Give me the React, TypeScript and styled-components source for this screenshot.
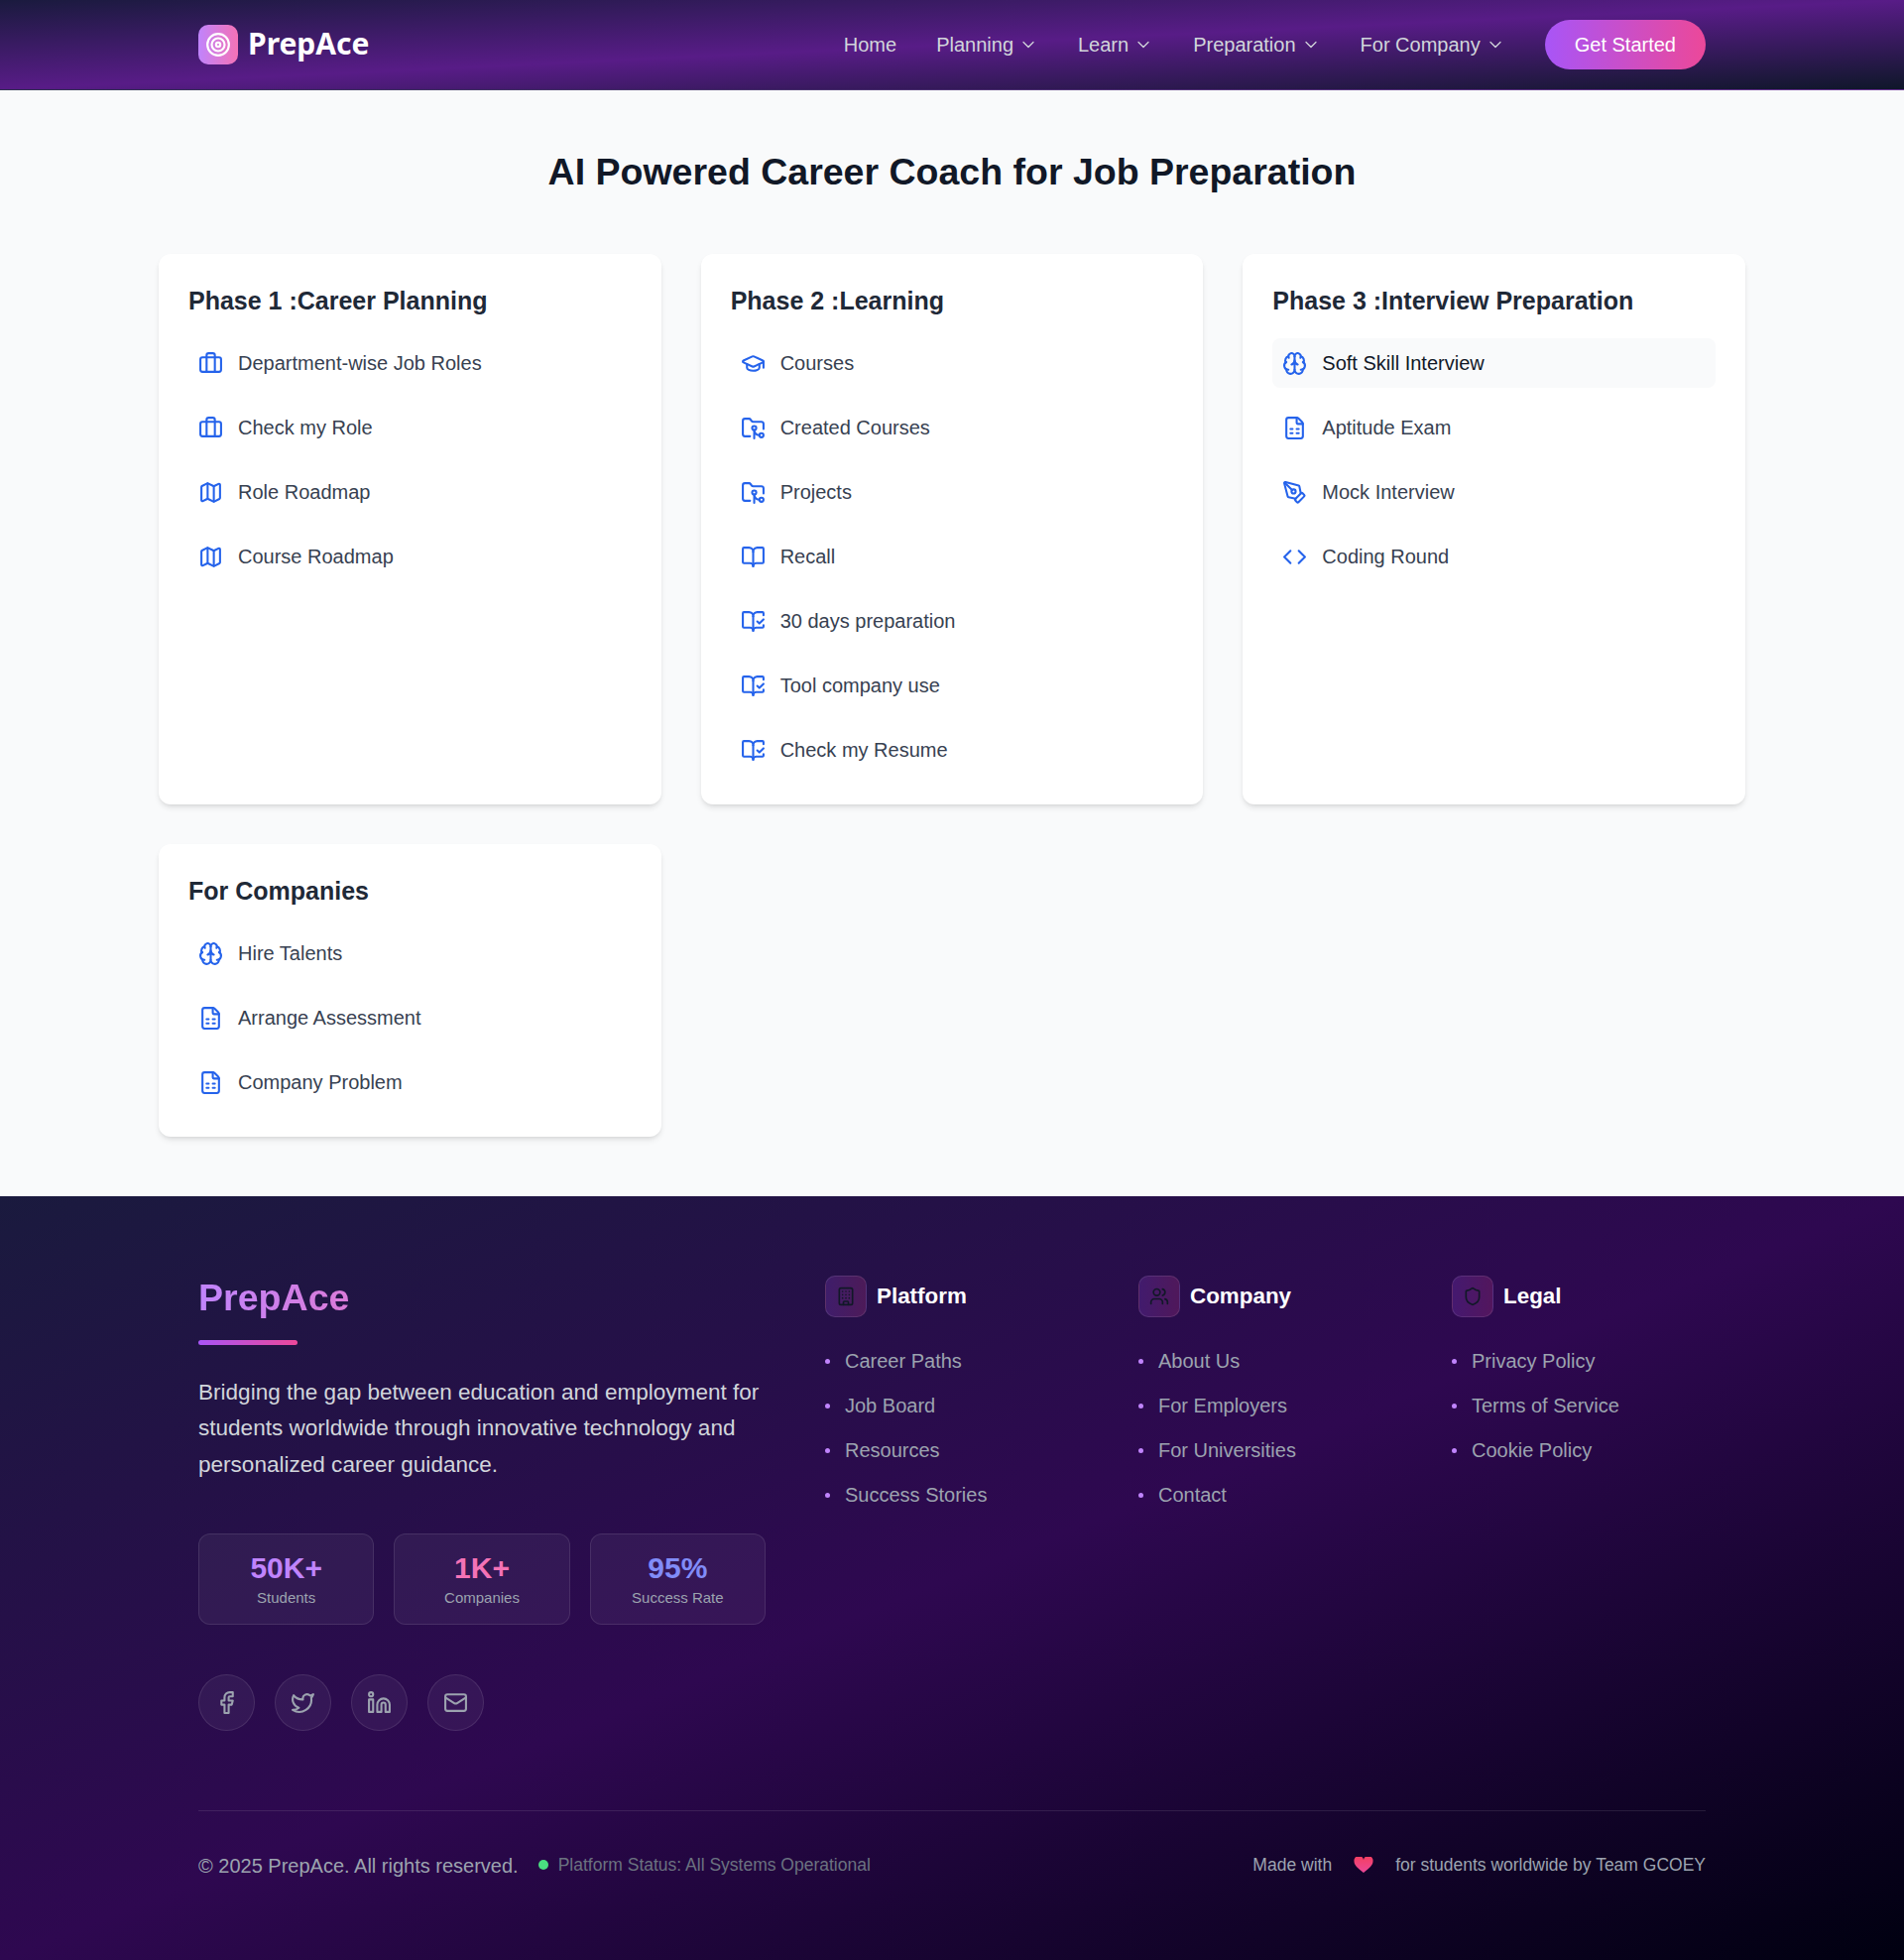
import React from "react";
import styled, { createGlobalStyle } from "styled-components";
import {
  Target, ChevronDown, Briefcase, Map as MapIcon, GraduationCap, FolderGit2, BookOpen, BookOpenCheck,
  Brain, FileSpreadsheet, PenTool, Code, Building, Users, Shield, Facebook, Twitter, Linkedin, Mail,
} from "lucide-react";

const Global = createGlobalStyle`
  * { box-sizing: border-box; }
  html, body { margin: 0; padding: 0; }
  body { font-family: "Liberation Sans", Arial, sans-serif; background: #f9fafb; }
`;

const Header = styled.header`
  background: linear-gradient(to bottom right, #1a1a3e, #581c87, #0f172a);
  border-bottom: 1px solid rgba(255, 255, 255, 0.1);
`;
const HeaderInner = styled.div`
  width: 1520px;
  height: 90px;
  margin: 0 auto;
  display: flex;
  align-items: center;
  justify-content: space-between;
`;
const Logo = styled.div`
  display: flex;
  align-items: center;
  gap: 10px;
`;
const LogoMark = styled.div`
  width: 40px;
  height: 40px;
  border-radius: 10px;
  background: linear-gradient(to right, #c084fc, #f472b6);
  display: flex;
  align-items: center;
  justify-content: center;
  color: #fff;
`;
const LogoText = styled.span`
  font-family: "Noto Sans", sans-serif;
  font-weight: 700;
  font-size: 30px;
  line-height: 38px;
  padding-bottom: 2px;
  color: #fff;
`;
const Nav = styled.nav`
  display: flex;
  align-items: center;
  gap: 40px;
`;
const NavItem = styled.a`
  display: flex;
  align-items: center;
  gap: 5px;
  font-size: 20px;
  color: #d1d5db;
`;
const CtaButton = styled.button`
  height: 50px;
  padding: 0 30px;
  border: 0;
  border-radius: 25px;
  background: linear-gradient(to right, #a855f7, #ec4899);
  color: #fff;
  font: 500 20px "Liberation Sans", Arial, sans-serif;
`;

const Main = styled.main`
  width: 1600px;
  margin: 0 auto;
  padding: 60px 0;
`;
const Title = styled.h1`
  margin: 0 0 61px;
  text-align: center;
  font-size: 37.5px;
  line-height: 44px;
  font-weight: 700;
  color: #111827;
`;
const CardGrid = styled.div`
  display: grid;
  grid-template-columns: repeat(3, 1fr);
  gap: 40px;
`;
const Card = styled.section`
  background: #fff;
  border-radius: 12px;
  padding: 30px;
  box-shadow: 0 4px 6px -1px rgba(0, 0, 0, 0.1), 0 2px 4px -2px rgba(0, 0, 0, 0.1);
`;
const CardTitle = styled.h2`
  margin: 0 0 20px;
  font-size: 25px;
  line-height: 35px;
  font-weight: 700;
  color: #1f2937;
`;
const ItemList = styled.div`
  display: flex;
  flex-direction: column;
  gap: 15px;
`;
const Item = styled.a<{ $active?: boolean }>`
  height: 50px;
  display: flex;
  align-items: center;
  gap: 15px;
  padding: 0 10px;
  border-radius: 8px;
  font-size: 20px;
  color: ${(p) => (p.$active ? "#111827" : "#374151")};
  background: ${(p) => (p.$active ? "#f9fafb" : "transparent")};
  svg { color: #2563eb; flex: none; }
`;

const Footer = styled.footer`
  background: linear-gradient(to bottom right, #1a1a3e, #2e0850, #000010);
  padding: 80px 0;
  height: 770px;
`;
const FooterInner = styled.div`
  width: 1520px;
  margin: 0 auto;
`;
const FooterGrid = styled.div`
  display: grid;
  grid-template-columns: 572px repeat(3, 1fr);
  gap: 60px;
  height: 539px;
`;
const BrandName = styled.div`
  font-size: 37.6px;
  line-height: 45px;
  font-weight: 700;
  background: linear-gradient(to right, #c084fc, #f472b6);
  width: 300px;
  -webkit-background-clip: text;
  background-clip: text;
  color: transparent;
`;
const BrandRule = styled.div`
  width: 100px;
  height: 5px;
  margin: 20px 0 30px;
  border-radius: 3px;
  background: linear-gradient(to right, #a855f7, #ec4899);
`;
const BrandText = styled.p`
  margin: 0 0 51px;
  font-size: 22.56px;
  line-height: 36.4px;
  color: #d1d5db;
`;
const Stats = styled.div`
  display: grid;
  grid-template-columns: repeat(3, 1fr);
  gap: 20px;
`;
const Stat = styled.div`
  height: 92px;
  display: flex;
  flex-direction: column;
  align-items: center;
  justify-content: center;
  border-radius: 12px;
  border: 1px solid rgba(255, 255, 255, 0.1);
  background: rgba(255, 255, 255, 0.05);
`;
const StatValue = styled.div<{ $color: string }>`
  font-size: 30px;
  line-height: 36px;
  font-weight: 700;
  margin-bottom: 2px;
  color: ${(p) => p.$color};
`;
const StatLabel = styled.div`
  font-size: 15px;
  line-height: 20px;
  color: #9ca3af;
`;
const Socials = styled.div`
  display: flex;
  gap: 20px;
  margin-top: 50px;
`;
const Social = styled.a`
  width: 57px;
  height: 57px;
  border-radius: 50%;
  display: flex;
  align-items: center;
  justify-content: center;
  border: 1px solid rgba(255, 255, 255, 0.1);
  background: rgba(255, 255, 255, 0.05);
  color: #9ca3af;
`;
const ColHead = styled.div`
  display: flex;
  align-items: center;
  gap: 10px;
  margin-bottom: 30px;
`;
const ColIcon = styled.div`
  width: 42px;
  height: 42px;
  border-radius: 10px;
  display: flex;
  align-items: center;
  justify-content: center;
  color: #111827;
  border: 1px solid rgba(255, 255, 255, 0.1);
  background: linear-gradient(to right, rgba(168, 85, 247, 0.2), rgba(236, 72, 153, 0.2));
`;
const ColTitle = styled.h3`
  margin: 0;
  font-size: 22.4px;
  font-weight: 700;
  color: #fff;
`;
const LinkList = styled.ul`
  list-style: none;
  margin: 0;
  padding: 0;
  display: flex;
  flex-direction: column;
  gap: 17px;
`;
const LinkRow = styled.li`
  position: relative;
  padding-left: 20px;
  font-size: 20px;
  line-height: 28px;
  color: #9ca3af;
  &::before {
    content: "";
    position: absolute;
    left: 0;
    top: 12px;
    width: 5px;
    height: 5px;
    border-radius: 50%;
    background: #c084fc;
  }
`;
const BottomBar = styled.div`
  border-top: 1px solid rgba(255, 255, 255, 0.1);
  padding-top: 40px;
  display: flex;
  justify-content: space-between;
  align-items: center;
`;
const BottomLeft = styled.div`
  display: flex;
  align-items: center;
  gap: 20px;
`;
const Copyright = styled.span`
  font-size: 20px;
  line-height: 30px;
  color: #9ca3af;
`;
const Status = styled.span`
  display: flex;
  align-items: center;
  gap: 10px;
  padding-bottom: 2px;
  font-size: 17.5px;
  color: #6b7280;
`;
const StatusDot = styled.span`
  width: 10px;
  height: 10px;
  border-radius: 50%;
  background: #4ade80;
`;
const Made = styled.div`
  display: flex;
  align-items: center;
  gap: 22px;
  padding-bottom: 2px;
  font-size: 17.5px;
  color: #9ca3af;
`;

const phase = [
  { title: "Phase 1 :Career Planning", items: [
    { I: Briefcase, t: "Department-wise Job Roles" }, { I: Briefcase, t: "Check my Role" },
    { I: MapIcon, t: "Role Roadmap" }, { I: MapIcon, t: "Course Roadmap" } ] },
  { title: "Phase 2 :Learning", items: [
    { I: GraduationCap, t: "Courses" }, { I: FolderGit2, t: "Created Courses" }, { I: FolderGit2, t: "Projects" },
    { I: BookOpen, t: "Recall" }, { I: BookOpenCheck, t: "30 days preparation" },
    { I: BookOpenCheck, t: "Tool company use" }, { I: BookOpenCheck, t: "Check my Resume" } ] },
  { title: "Phase 3 :Interview Preparation", items: [
    { I: Brain, t: "Soft Skill Interview", active: true }, { I: FileSpreadsheet, t: "Aptitude Exam" },
    { I: PenTool, t: "Mock Interview" }, { I: Code, t: "Coding Round" } ] },
  { title: "For Companies", items: [
    { I: Brain, t: "Hire Talents" }, { I: FileSpreadsheet, t: "Arrange Assessment" }, { I: FileSpreadsheet, t: "Company Problem" } ] },
];

const columns = [
  { title: "Platform", I: Building, links: ["Career Paths", "Job Board", "Resources", "Success Stories"] },
  { title: "Company", I: Users, links: ["About Us", "For Employers", "For Universities", "Contact"] },
  { title: "Legal", I: Shield, links: ["Privacy Policy", "Terms of Service", "Cookie Policy"] },
];

const Heart = () => (
  <svg width="20" height="16" viewBox="0 0 20 16">
    <defs>
      <linearGradient id="h" x1="0" y1="0" x2="0" y2="1">
        <stop offset="0" stopColor="#f43f5e" />
        <stop offset="1" stopColor="#ec4899" />
      </linearGradient>
    </defs>
    <path fill="url(#h)" d="M10 16C4 11 .5 8.500 .5 4.500a4.500 4.500 0 0 1 9.500-1.500A4.500 4.500 0 0 1 19.500 4.500C19.500 8.500 16 11 10 16z" />
  </svg>
);

export default function App() {
  return (
    <>
      <Global />
      <Header>
        <HeaderInner>
          <Logo>
            <LogoMark><Target size={26} /></LogoMark>
            <LogoText>PrepAce</LogoText>
          </Logo>
          <Nav>
            <NavItem>Home</NavItem>
            {["Planning", "Learn", "Preparation", "For Company"].map((n) => (
              <NavItem key={n}>{n}<ChevronDown size={20} strokeWidth={1.5} /></NavItem>
            ))}
            <CtaButton>Get Started</CtaButton>
          </Nav>
        </HeaderInner>
      </Header>
      <Main>
        <Title>AI Powered Career Coach for Job Preparation</Title>
        <CardGrid>
          {phase.map((c) => (
            <Card key={c.title}>
              <CardTitle>{c.title}</CardTitle>
              <ItemList>
                {c.items.map((it: any) => (
                  <Item key={it.t} $active={it.active}><it.I size={25} />{it.t}</Item>
                ))}
              </ItemList>
            </Card>
          ))}
        </CardGrid>
      </Main>
      <Footer>
        <FooterInner>
          <FooterGrid>
            <div>
              <BrandName>PrepAce</BrandName>
              <BrandRule />
              <BrandText>Bridging the gap between education and employment for students worldwide through innovative technology and personalized career guidance.</BrandText>
              <Stats>
                <Stat><StatValue $color="#c084fc">50K+</StatValue><StatLabel>Students</StatLabel></Stat>
                <Stat><StatValue $color="#f472b6">1K+</StatValue><StatLabel>Companies</StatLabel></Stat>
                <Stat><StatValue $color="#818cf8">95%</StatValue><StatLabel>Success Rate</StatLabel></Stat>
              </Stats>
              <Socials>
                <Social><Facebook size={25} /></Social>
                <Social><Twitter size={25} /></Social>
                <Social><Linkedin size={25} /></Social>
                <Social><Mail size={25} /></Social>
              </Socials>
            </div>
            {columns.map((c) => (
              <div key={c.title}>
                <ColHead>
                  <ColIcon><c.I size={20} /></ColIcon>
                  <ColTitle>{c.title}</ColTitle>
                </ColHead>
                <LinkList>
                  {c.links.map((l) => <LinkRow key={l}>{l}</LinkRow>)}
                </LinkList>
              </div>
            ))}
          </FooterGrid>
          <BottomBar>
            <BottomLeft>
              <Copyright>© 2025 PrepAce. All rights reserved.</Copyright>
              <Status><StatusDot />Platform Status: All Systems Operational</Status>
            </BottomLeft>
            <Made><span>Made with</span><Heart /><span>for students worldwide by Team GCOEY</span></Made>
          </BottomBar>
        </FooterInner>
      </Footer>
    </>
  );
}
